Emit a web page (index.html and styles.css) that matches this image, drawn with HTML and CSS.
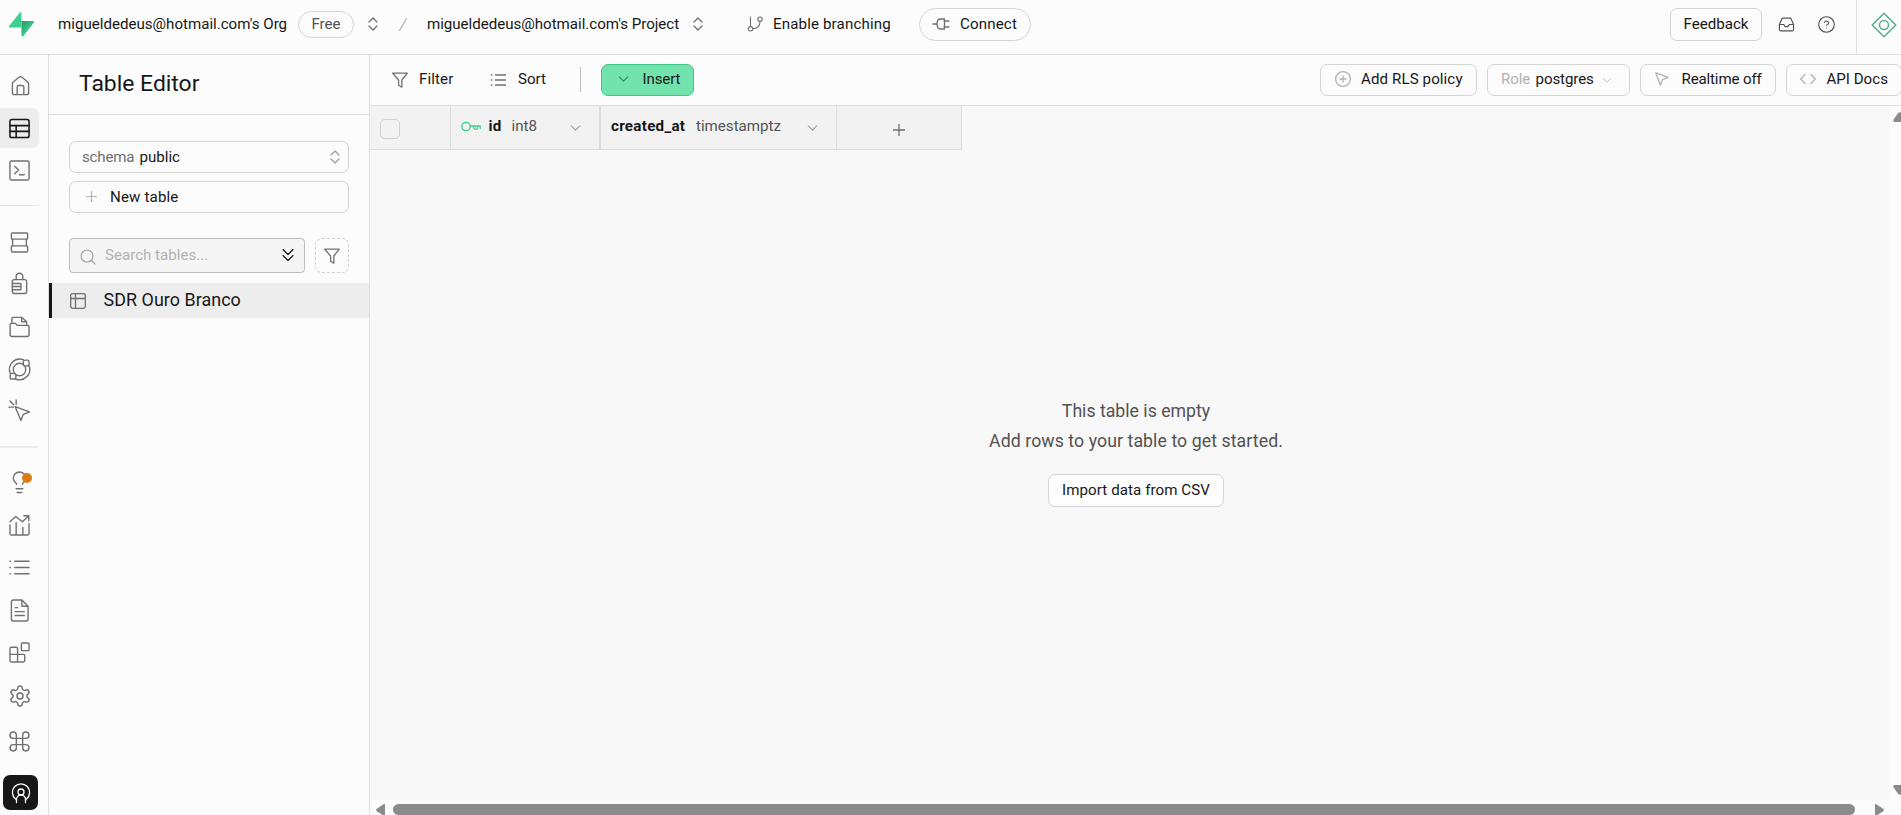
FILE: index.html
```
<!DOCTYPE html>
<html lang="en">
<head>
<meta charset="utf-8">
<title>Table Editor</title>
<link rel="stylesheet" href="styles.css">
</head>
<body>
<div class="app">
  <header class="topbar">
    <svg class="logo" viewBox="0 0 25 25">
      <defs><linearGradient id="bolt" x1="0" y1="0" x2="1" y2="1"><stop offset="0" stop-color="#249361"/><stop offset=".6" stop-color="#3ecf8e"/></linearGradient></defs>
      <path d="M12.500 9H24c1 0 1.400.9.8 1.700L14.200 24.200c-.5.7-1.700.4-1.700-.6z" fill="url(#bolt)"/>
      <path d="M12.500 15.500H1.200c-1 0-1.500-1-.9-1.800L10.900.6c.5-.7 1.600-.3 1.600.6z" fill="#3ecf8e"/>
    </svg>
    <span class="org">migueldedeus@hotmail.com's Org</span>
    <span class="plan">Free</span>
    <svg class="updown" viewBox="0 0 10 14"><path d="M1 5l4-4 4 4M1 9l4 4 4-4"/></svg>
    <svg class="slash" viewBox="0 0 8 13"><path d="M7.500.5l-7 12"/></svg>
    <span class="project">migueldedeus@hotmail.com's Project</span>
    <svg class="updown" viewBox="0 0 10 14"><path d="M1 5l4-4 4 4M1 9l4 4 4-4"/></svg>
    <svg class="branch" viewBox="0 0 15 16"><path d="M2.500 1v9.500M12 5.500c0 4-2.500 7-7 7.300"/><circle cx="2.500" cy="12.800" r="2.200"/><circle cx="12" cy="3.200" r="2.200"/></svg>
    <span class="branching">Enable branching</span>
    <span class="connect"><svg class="plug" viewBox="0 0 16 12"><path d="M0 6h4M11 3h5M11 9h5M11.500 1H7.500C5.500 1 4 3 4 6s1.500 5 3.500 5h4z"/></svg>Connect</span>
    <span class="feedback">Feedback</span>
    <svg class="inbox" viewBox="0 0 24 24"><path d="M22 12h-6l-2 3h-4l-2-3H2M5.450 4.110L2 12v7a2 2 0 0 0 2 2h16a2 2 0 0 0 2-2v-7l-3.450-7.890A2 2 0 0 0 16.760 3H7.240a2 2 0 0 0-1.790 1.110z"/></svg>
    <svg class="help" viewBox="0 0 24 24"><circle cx="12" cy="12" r="11"/><path d="M9.100 9a3 3 0 0 1 5.800 1c0 2-3 3-3 3M12 17h.01"/></svg>
    <div class="assistant"><svg class="diamond" viewBox="0 0 26 26"><path d="M13 1.200L24.800 13 13 24.800 1.200 13z"/><circle cx="13" cy="13" r="4.500"/></svg></div>
  </header>

  <nav class="rail">
    <div class="slot home"><svg class="ic" viewBox="0 0 22 22"><path d="M2.500 9.300c0-.8.3-1.400.9-1.900l6-5a2.400 2.400 0 0 1 3.200 0l6 5c.6.5.9 1.100.9 1.900v9.200a2 2 0 0 1-2 2h-13a2 2 0 0 1-2-2zM7.500 20.500v-8a1.500 1.500 0 0 1 1.500-1.500h4a1.500 1.500 0 0 1 1.500 1.500v8"/></svg></div>
    <div class="slot active"><svg class="ic" viewBox="0 0 22 22"><rect x="1" y="1.500" width="20" height="19" rx="2"/><path d="M1 8h20M1 14h20M7.500 8v12.500"/></svg></div>
    <div class="slot"><svg class="ic" viewBox="0 0 22 22"><rect x="1" y="1" width="20" height="20" rx="1.500"/><path d="M6 6.500l4 4-4 4M11 15.500h5"/></svg></div>
    <hr class="rule">
    <div class="slot"><svg class="ic" viewBox="0 0 22 22"><rect x="2.500" y="1" width="17" height="6.500" rx="1"/><rect x="2.500" y="14.500" width="17" height="6.500" rx="1"/><path d="M3.800 7.500v7M18.200 7.500v7"/></svg></div>
    <div class="slot"><svg class="ic" viewBox="0 0 22 22"><rect x="3.500" y="7" width="15" height="14.500" rx="2"/><path d="M7.500 7V3.800a3.500 3.500 0 0 1 7 0V7M3.500 11h9v6.500h-9M3.500 14.200h9"/></svg></div>
    <div class="slot"><svg class="ic" viewBox="0 0 22 22"><path d="M3 7.500V3a1.500 1.500 0 0 1 1.500-1.500h9L18.500 6v3.500M13.300 1.500V6h5M1.200 9A1.300 1.300 0 0 1 2.500 7.700h4l2.200 2.100h10.800A1.500 1.500 0 0 1 21 11.300v8.200a2 2 0 0 1-2 2H3.200a2 2 0 0 1-2-2z"/></svg></div>
    <div class="slot"><svg class="ic" viewBox="0 0 22 22"><circle cx="11" cy="11" r="6.500"/><path d="M15 .8A10.800 10.800 0 0 0 1.300 15M21 7A10.800 10.800 0 0 1 7 21"/><rect class="node" x="15" y="1.200" width="6" height="6" rx="2"/><rect class="node" x="1.200" y="15" width="6" height="6" rx="2"/></svg></div>
    <div class="slot"><svg class="ic" viewBox="0 0 22 22"><path d="M6.500 7l15 5.500-6.500 2.500-2.500 6.500zM1 1l4 4M7.500 0v4.500M0 7.500h4.500"/></svg></div>
    <hr class="rule thick">
    <div class="slot bulb"><svg class="ic" viewBox="0 0 22 22"><path d="M8 13c-.2-1.700-3.500-2.800-3.500-6.500a6.500 6.500 0 0 1 13 0c0 3.700-3.300 4.800-3.500 6.500M7.500 17.500h7M8.500 21.500h5"/></svg><i class="dot"></i></div>
    <div class="slot"><svg class="ic" viewBox="0 0 22 22"><path d="M1 7l6-5.500 7 5.500 6.500-6M15.500.8h5.300v5.300M1 10.500V19.500a1.500 1.500 0 0 0 1.500 1.500h17A1.500 1.500 0 0 0 21 19.500V9M7.500 8v13M14.500 13v8"/></svg></div>
    <div class="slot"><svg class="ic" viewBox="0 0 22 22"><path d="M6 4.500h15M6 11h15M6 17.500h15M1 4.500h.5M1 11h.5M1 17.500h.5"/></svg></div>
    <div class="slot"><svg class="ic" viewBox="0 0 22 22"><path d="M13.500 0h-9a2 2 0 0 0-2 2v18a2 2 0 0 0 2 2h13.500a2 2 0 0 0 2-2V6.500zM13.500 0v6.500H20M6.500 8H9M6.500 12.200h9.500M6.500 16.200h9.500"/></svg></div>
    <div class="slot"><svg class="ic" viewBox="0 0 22 22"><path d="M1 7a1.500 1.500 0 0 1 1.500-1.500h5A1.500 1.500 0 0 1 9 7v6h6a1.500 1.500 0 0 1 1.500 1.500v5A1.500 1.500 0 0 1 15 21H2.500A1.500 1.500 0 0 1 1 19.500zM1 13h8v8"/><rect x="13" y="1" width="8" height="8" rx="1"/></svg></div>
    <div class="slot"><svg class="ic gear" viewBox="0 0 24 24"><path d="M12.220 2h-.44a2 2 0 0 0-2 2v.18a2 2 0 0 1-1 1.730l-.43.25a2 2 0 0 1-2 0l-.15-.08a2 2 0 0 0-2.730.73l-.22.38a2 2 0 0 0 .73 2.730l.15.1a2 2 0 0 1 1 1.720v.51a2 2 0 0 1-1 1.740l-.15.09a2 2 0 0 0-.73 2.730l.22.38a2 2 0 0 0 2.730.73l.15-.08a2 2 0 0 1 2 0l.43.25a2 2 0 0 1 1 1.730V20a2 2 0 0 0 2 2h.44a2 2 0 0 0 2-2v-.18a2 2 0 0 1 1-1.730l.43-.25a2 2 0 0 1 2 0l.15.08a2 2 0 0 0 2.730-.73l.22-.39a2 2 0 0 0-.73-2.730l-.15-.08a2 2 0 0 1-1-1.740v-.5a2 2 0 0 1 1-1.740l.15-.09a2 2 0 0 0 .73-2.730l-.22-.38a2 2 0 0 0-2.730-.73l-.15.08a2 2 0 0 1-2 0l-.43-.25a2 2 0 0 1-1-1.730V4a2 2 0 0 0-2-2z"/><circle cx="12" cy="12" r="3"/></svg></div>
    <div class="slot"><svg class="ic command" viewBox="2 2 20 20"><path d="M15 6v12a3 3 0 1 0 3-3H6a3 3 0 1 0 3 3V6a3 3 0 1 0-3 3h12a3 3 0 1 0-3-3"/></svg></div>
    <div class="avatar"><svg class="person" viewBox="0 0 20 20"><path d="M4.500 16A8.600 8.600 0 1 1 15.500 16M5.500 19.500V16.500a4.500 4.500 0 0 1 9 0v3"/><circle cx="10" cy="9" r="3"/></svg></div>
  </nav>

  <aside class="panel">
    <h1 class="title">Table Editor</h1>
    <div class="field schema"><span class="muted">schema</span><span>public</span><svg class="updown light" viewBox="0 0 10 14"><path d="M1 5l4-4 4 4M1 9l4 4 4-4"/></svg></div>
    <div class="field newtable"><svg class="plus" viewBox="0 0 12 12"><path d="M6 0v12M0 6h12"/></svg><span>New table</span></div>
    <div class="searchrow">
      <div class="search"><svg class="glass" viewBox="0 0 16 16"><circle cx="7" cy="7" r="6"/><path d="M11.500 11.500L15 15"/></svg><span>Search tables...</span><svg class="double" viewBox="0 0 12 14"><path d="M1 1.500l5 5 5-5M1 7.500l5 5 5-5"/></svg></div>
      <div class="filterbox"><svg class="funnel" viewBox="0 0 16 16"><path d="M.7 1.200h14.600L9.800 8v7.200l-3.200-2V8z"/></svg></div>
    </div>
    <div class="entry"><svg class="tbl" viewBox="0 0 16 16"><rect x=".7" y=".7" width="14.600" height="14.600" rx="1.800"/><path d="M.7 5.500h14.600M5.500.7v14.600"/></svg><span>SDR Ouro Branco</span></div>
  </aside>

  <main class="main">
    <div class="toolbar">
      <svg class="funnel" viewBox="0 0 16 16"><path d="M.7 1.200h14.600L9.800 8v7.200l-3.200-2V8z"/></svg>
      <span class="t-filter">Filter</span>
      <svg class="lines" viewBox="0 0 15 12"><path d="M4 1h11M4 6h11M4 11h11M0 1h1.500M0 6h1.500M0 11h1.500"/></svg>
      <span class="t-sort">Sort</span>
      <i class="bar"></i>
      <span class="insert"><svg class="chev" viewBox="0 0 12 7"><path d="M1 1l5 5 5-5"/></svg>Insert</span>
      <div class="actions">
        <span class="btn rls"><svg class="circleplus" viewBox="0 0 16 16"><circle cx="8" cy="8" r="7.400"/><path d="M8 5v6M5 8h6"/></svg>Add RLS policy</span>
        <span class="btn role"><em class="faint">Role</em>postgres<svg class="chev small" viewBox="0 0 12 7"><path d="M1 1l5 5 5-5"/></svg></span>
        <span class="btn realtime"><svg class="pointer" viewBox="0 0 14 14"><path d="M.8.8l12.400 4.500-5.600 2.300-2.300 5.600z"/></svg>Realtime off</span>
        <span class="btn api"><svg class="code" viewBox="0 0 16 10"><path d="M5 .5L.7 5 5 9.500M11 .5L15.300 5 11 9.500"/></svg>API Docs</span>
      </div>
    </div>
    <div class="sheet">
      <div class="canvas">
        <div class="heads">
          <div class="th c0"><i class="check"></i></div>
          <div class="th c1"><svg class="key" viewBox="0 0 20 11"><circle cx="5" cy="5.500" r="4.200"/><path d="M9.200 5h10v2.500M12.800 5v2.200c0 1.400 3.700 1.400 3.700 0V5"/></svg><b>id</b><span class="type">int8</span><svg class="chev grey" viewBox="0 0 12 7"><path d="M1 1l5 5 5-5"/></svg></div>
          <div class="th c2"><b>created_at</b><span class="type">timestamptz</span><svg class="chev grey" viewBox="0 0 12 7"><path d="M1 1l5 5 5-5"/></svg></div>
          <div class="th c3"><svg class="plus dark" viewBox="0 0 12 12"><path d="M6 0v12M0 6h12"/></svg></div>
        </div>
        <div class="empty">
          <p class="line">This table is empty</p>
          <p class="line wide">Add rows to your table to get started.</p>
          <span class="csv">Import data from CSV</span>
        </div>
      </div>
      <div class="vscroll"><svg class="arrow" viewBox="0 0 14 10"><path d="M5 1.200Q7-.7 9 1.200L13.700 8Q14 10 12.500 10h-11Q0 10 .3 8z"/></svg><svg class="arrow" viewBox="0 0 14 10"><path d="M5 8.800Q7 10.700 9 8.800L13.700 2Q14 0 12.500 0h-11Q0 0 .3 2z"/></svg></div>
      <div class="hscroll"><svg class="side" viewBox="0 0 9 12"><path d="M9 0v12H8L.8 7.200Q-.5 6 .8 4.800L8 0z"/></svg><i class="thumb"></i><svg class="side" viewBox="0 0 9 12"><path d="M0 0v12h1l7.200-4.800Q9.500 6 8.200 4.800L1 0z"/></svg></div>
    </div>
  </main>
</div>
</body>
</html>
```
FILE: styles.css
```
* { box-sizing: border-box; }
body { margin: 0; overflow: hidden; background: #fcfcfc; color: #171717; font: 15.1px/20px Roboto, "Liberation Sans", sans-serif; }
svg { display: block; flex: none; overflow: visible; fill: none; stroke: #707070; stroke-width: 1.3; stroke-linecap: round; stroke-linejoin: round; }
span, b, em { white-space: nowrap; }
.app { display: grid; grid-template: 55px 760px / 49px 321px 1531px; width: 1901px; height: 815px; overflow: hidden; }

.topbar { grid-column: 1 / -1; display: flex; align-items: center; padding: 0 0 6px 9px; border-bottom: 1px solid #dfdfdf; }
.logo { width: 25px; height: 25px; stroke: none; }
.org { width: 240px; margin-left: 24px; }
.plan { width: 56px; height: 27px; border: 1px solid #d4d4d4; border-radius: 14px; color: #525252; line-height: 25px; text-align: center; }
.updown { width: 10px; height: 14px; }
.plan + .updown { margin-left: 14px; }
.slash { width: 8px; height: 13px; margin-left: 21px; stroke: #a8a8a8; stroke-width: 1.1; }
.project { width: 266px; margin-left: 20px; letter-spacing: -.02px; }
.branch { width: 15px; height: 16px; margin-left: 45px; stroke-width: 1.1; }
.branching { width: 146px; margin-left: 10px; letter-spacing: .14px; }
.connect { display: flex; align-items: center; width: 112px; height: 33px; padding-left: 13px; border: 1px solid #d4d4d4; border-radius: 17px; letter-spacing: .15px; }
.plug { width: 16px; height: 12px; margin-right: 11px; }
.feedback { width: 92px; height: 33px; margin-left: 639px; border: 1px solid #d4d4d4; border-radius: 7px; line-height: 31px; text-align: center; }
.inbox { width: 17px; height: 17px; margin-left: 16px; stroke: #525252; stroke-width: 1.6; }
.help { width: 17px; height: 17px; margin-left: 23px; stroke: #525252; stroke-width: 1.6; }
.assistant { display: flex; align-items: center; align-self: flex-start; width: 45px; height: 54px; margin-left: 21px; padding: 0 0 5px 13.5px; border-left: 1px solid #dfdfdf; }
.diamond { width: 26px; height: 26px; stroke: #59ae8a; stroke-width: 1.5; }

.rail { display: grid; grid-template-rows: 42px 42px 43px 29px 42px 41px 45px 40px 43px 29px 42px 44px 41px 44px 41px 45px 46px 51px; padding-top: 10px; border-right: 1px solid #dfdfdf; }
.slot { display: flex; align-items: center; width: 39px; padding-left: 9px; }
.ic { width: 21px; height: 21px; stroke-width: 1.45; }
.home { padding-bottom: 1px; }
.home .ic { margin-left: .5px; }
.gear { width: 24px; height: 24px; margin: 1px 0 0 -1.5px; }
.command { stroke-width: 1.35; }
.active { height: 40px; margin-top: 1px; border-radius: 0 7px 7px 0; background: #ededed; }
.active .ic { stroke: #171717; stroke-width: 1.6; }
.node { fill: #fcfcfc; }
.rule { width: 38px; height: 1px; margin: 13px 0 0; border: 0; background: #e4e4e4; }
.thick { height: 2px; margin-top: 14px; background: #ebebeb; }
.bulb { position: relative; }
.dot { position: absolute; left: 22px; top: 12px; width: 10px; height: 10px; border-radius: 50%; background: #db7b14; }
.avatar { display: flex; align-items: center; justify-content: center; width: 35px; height: 35px; margin: 11px 0 0 3px; border-radius: 7px; background: #171717; }
.person { width: 20px; height: 20px; stroke: #fff; }

.panel { border-right: 1px solid #dfdfdf; }
.title { height: 60px; margin: 0 0 26px; padding-left: 30px; border-bottom: 1px solid #dfdfdf; font-size: 22.9px; font-weight: 400; line-height: 58px; }
.field { display: flex; align-items: center; width: 280px; height: 32px; margin: 0 0 8px 20px; border: 1px solid #d4d4d4; border-radius: 7px; }
.schema { gap: 6px; padding: 0 8px 1px 12px; }
.muted { width: 51.5px; color: #707070; letter-spacing: -.2px; }
.light { margin-left: auto; stroke: #a0a0a0; }
.newtable { gap: 13px; padding: 0 0 1px 17px; letter-spacing: .15px; }
.plus { width: 11px; height: 11px; stroke: #b2b2b2; stroke-linecap: butt; }
.dark { width: 12px; height: 12px; stroke: #707070; }
.newtable .plus { margin-left: -1px; }
.searchrow { display: flex; gap: 10px; margin: 25px 0 10px 20px; }
.search { display: flex; align-items: center; width: 236px; height: 35px; padding: 0 10px 1px; border: 1px solid #bdbdbd; border-radius: 4px; background: #f5f5f5; color: #b2b2b2; }
.glass { width: 16px; height: 16px; margin: 3px 9px 0 0; stroke: #a0a0a0; stroke-width: 1.1; }
.double { width: 12px; height: 14px; margin-left: auto; stroke: #171717; stroke-width: 1.15; }
.filterbox { display: flex; align-items: center; justify-content: center; width: 34px; height: 35px; padding-right: 1px; border: 1px dashed #cfcfcf; border-radius: 7px; }
.funnel { width: 16px; height: 16px; }
.entry { display: flex; align-items: center; height: 35px; padding-left: 18px; border-left: 3px solid #171717; background: #ededed; font-size: 17.9px; letter-spacing: .05px; }
.entry span { padding-bottom: 1px; }
.tbl { width: 16px; height: 16px; margin-right: 17.5px; }

.main { display: grid; grid-template-rows: 51px 709px; }
.toolbar { display: flex; align-items: center; padding: 0 0 1px 22px; border-bottom: 1px solid #dfdfdf; }
.t-filter { width: 72px; margin-left: 11px; padding-bottom: 1px; letter-spacing: .1px; }
.lines { width: 15px; height: 12px; stroke-linecap: butt; }
.t-sort { width: 62px; margin-left: 12px; padding-bottom: 1px; }
.bar { width: 1px; height: 25px; background: #bdbdbd; }
.insert { display: flex; align-items: center; width: 93px; height: 32px; margin-left: 20px; padding: 0 0 1px 16px; border: 1px solid #3fc58a; border-radius: 7px; background: #72e3ad; letter-spacing: -.15px; }
.chev { width: 11px; height: 6px; }
.insert .chev { margin-right: 13.5px; stroke: #2b8a5e; }
.actions { display: flex; gap: 10px; margin-left: 626px; }
.btn { display: flex; flex: none; align-items: center; height: 32px; padding-bottom: 1px; border: 1px solid #d4d4d4; border-radius: 7px; }
.btn svg { stroke: #b2b2b2; }
.rls { width: 157px; padding-left: 14px; letter-spacing: .1px; }
.circleplus { width: 16px; height: 16px; margin-right: 10px; }
.role { width: 143px; padding-left: 13px; letter-spacing: -.1px; }
.faint { width: 34.5px; color: #b2b2b2; font-style: normal; }
.small { width: 8px; height: 5px; margin: 2px 0 0 9px; }
.realtime { width: 136px; padding-left: 14px; letter-spacing: -.15px; }
.pointer { width: 14px; height: 14px; margin-right: 12.5px; }
.api { width: 116px; padding-left: 13px; }
.code { width: 16px; height: 10px; margin-right: 10.5px; }

.sheet { display: grid; grid-template: 694px 15px / 1520px 11px; }
.canvas { background: #f8f8f8; }
.heads { display: flex; width: 592px; height: 44px; border-bottom: 1px solid #dcdcdc; background: #f2f2f2; }
.th { display: flex; align-items: center; padding-bottom: 3px; border-right: 1px solid #dcdcdc; }
.c0 { width: 81px; padding: 2px 0 0 10px; }
.check { width: 20px; height: 20px; border: 1px solid #d0d0d0; border-radius: 5px; }
.c1 { width: 150px; padding-left: 10px; border-right-width: 2px; }
.c1 b { width: 23px; margin-left: 7.5px; letter-spacing: 0; }
.c2 { width: 236px; padding-left: 10px; }
.c2 b { width: 85px; }
.c3 { width: 125px; justify-content: center; padding: 5px 0 0; }
.th b { font-weight: 700; font-size: 15.2px; letter-spacing: .27px; }
.type { color: #525252; }
.key { width: 20px; height: 11px; stroke: #3ecf8e; }
.grey { margin: 3px 18px 0 auto; stroke: #a0a0a0; }
.empty { display: flex; flex-direction: column; align-items: center; margin: 246px 0 0 12px; }
.line { margin: 0; color: #525252; font-size: 17.7px; line-height: 30px; }
.wide { letter-spacing: .08px; }
.csv { width: 176px; height: 33px; margin-top: 18px; border: 1px solid #d4d4d4; border-radius: 7px; background: #fdfdfd; line-height: 31px; text-align: center; letter-spacing: .08px; }
.vscroll { display: flex; flex-direction: column; justify-content: space-between; padding: 6px 0 5px 3px; }
.arrow { width: 14px; height: 10px; stroke: none; fill: #8b8b8b; }
.hscroll { grid-column: 1 / -1; display: flex; align-items: flex-start; padding: 4px 0 0 6px; background: #fcfcfc; }
.side { width: 9px; height: 12px; stroke: none; fill: #8b8b8b; }
.thumb { width: 1462px; height: 11px; margin: 0 20px 0 8px; border-radius: 6px; background: #8b8b8b; }
```
